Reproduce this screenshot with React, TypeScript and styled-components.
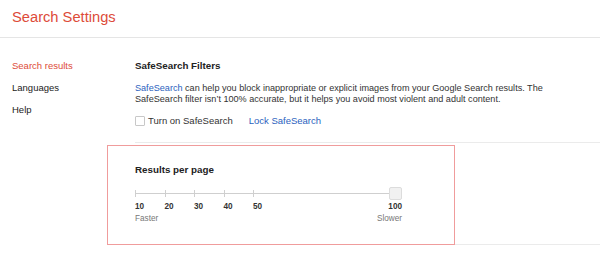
import React from "react";
import styled, { createGlobalStyle } from "styled-components";

const Global = createGlobalStyle`
  html, body { margin: 0; padding: 0; background: #fff; }
  body { font-family: "Liberation Sans", Arial, sans-serif; color: #222; width: 600px; height: 256px; overflow: hidden; }
  * { box-sizing: border-box; }
`;

const Header = styled.header`
  height: 38px;
  border-bottom: 1px solid #e5e5e5;
  padding: 8px 0 0 12px;
`;

const Title = styled.h1`
  margin: 0;
  font-size: 14.7px;
  line-height: 18px;
  font-weight: normal;
  color: #dd4b39;
`;

const Main = styled.div`
  display: flex;
  padding-top: 22px;
`;

const Nav = styled.nav`
  width: 135px;
  padding-left: 12px;
  display: flex;
  flex-direction: column;
  gap: 10px;
`;

const NavItem = styled.div<{ $active?: boolean }>`
  font-size: 9.5px;
  line-height: 12px;
  color: ${(p) => (p.$active ? "#dd4b39" : "#222")};
`;

const Content = styled.div`
  flex: 1;
  display: flex;
  flex-direction: column;
`;

const Heading = styled.h2`
  margin: 0;
  font-size: 9.8px;
  line-height: 12px;
  font-weight: bold;
  color: #222;
`;

const Paragraph = styled.p`
  margin: 11px 0 0;
  font-size: 9.1px;
  line-height: 11px;
  color: #333;
`;

const Link = styled.a`
  color: #2b5fbe;
  text-decoration: none;
`;

const CheckRow = styled.div`
  margin-top: 9px;
  display: flex;
  align-items: center;
  height: 12px;
  font-size: 9.5px;
  color: #333;
`;

const Checkbox = styled.span`
  width: 10px;
  height: 10px;
  border: 1px solid #c8c8c8;
  border-radius: 1px;
  background: #fff;
  margin: 2px 3px 0 0;
`;

const LockLink = styled(Link)`
  margin-left: 16px;
`;

const Section = styled.section`
  position: relative;
  margin-top: 16px;
  border-top: 1px solid #ebebeb;
  border-bottom: 1px solid #ebebeb;
  padding: 21px 0 18px;
`;

const Highlight = styled.div`
  position: absolute;
  left: -28px;
  top: 2px;
  width: 348px;
  height: 100px;
  border: 1px solid #f09c9c;
  pointer-events: none;
`;

const Slider = styled.div`
  position: relative;
  width: 267px;
  height: 13px;
  margin-top: 11px;
`;

const Track = styled.div`
  position: absolute;
  left: 0;
  right: 13px;
  top: 6px;
  height: 1px;
  background: #cfcfcf;
`;

const Tick = styled.div`
  position: absolute;
  top: 3px;
  width: 1px;
  height: 7px;
  background: #cfcfcf;
`;

const Thumb = styled.div`
  position: absolute;
  right: 0;
  top: 0;
  width: 13px;
  height: 13px;
  border: 1px solid #dcdcdc;
  border-radius: 2px;
  background: #f1f1f1;
`;

const Scale = styled.div`
  position: relative;
  width: 267px;
  height: 24px;
  margin-top: 2px;
`;

const Num = styled.span`
  position: absolute;
  top: 0;
  font-size: 8.2px;
  line-height: 10px;
  font-weight: bold;
  color: #333;
`;

const EndNum = styled(Num)`
  right: 0;
`;

const Hint = styled.span<{ $right?: boolean }>`
  position: absolute;
  top: 12px;
  ${(p) => (p.$right ? "right: 0;" : "left: 0;")}
  font-size: 8.2px;
  line-height: 10px;
  color: #777;
`;

const ticks = [10, 20, 30, 40, 50];
const step = 29.5;

export default function App() {
  return (
    <>
      <Global />
      <Header>
        <Title>Search Settings</Title>
      </Header>
      <Main>
        <Nav>
          <NavItem $active>Search results</NavItem>
          <NavItem>Languages</NavItem>
          <NavItem>Help</NavItem>
        </Nav>
        <Content>
          <Heading>SafeSearch Filters</Heading>
          <Paragraph>
            <Link href="#">SafeSearch</Link> can help you block inappropriate or explicit images from your Google Search results. The
            <br />
            SafeSearch filter isn’t 100% accurate, but it helps you avoid most violent and adult content.
          </Paragraph>
          <CheckRow>
            <Checkbox />
            Turn on SafeSearch
            <LockLink href="#">Lock SafeSearch</LockLink>
          </CheckRow>
          <Section>
            <Highlight />
            <Heading>Results per page</Heading>
            <Slider>
              <Track />
              {ticks.map((t, i) => (
                <Tick key={t} style={{ left: i * step }} />
              ))}
              <Thumb />
            </Slider>
            <Scale>
              {ticks.map((t, i) => (
                <Num key={t} style={{ left: i * step }}>
                  {t}
                </Num>
              ))}
              <EndNum>100</EndNum>
              <Hint>Faster</Hint>
              <Hint $right>Slower</Hint>
            </Scale>
          </Section>
        </Content>
      </Main>
    </>
  );
}
